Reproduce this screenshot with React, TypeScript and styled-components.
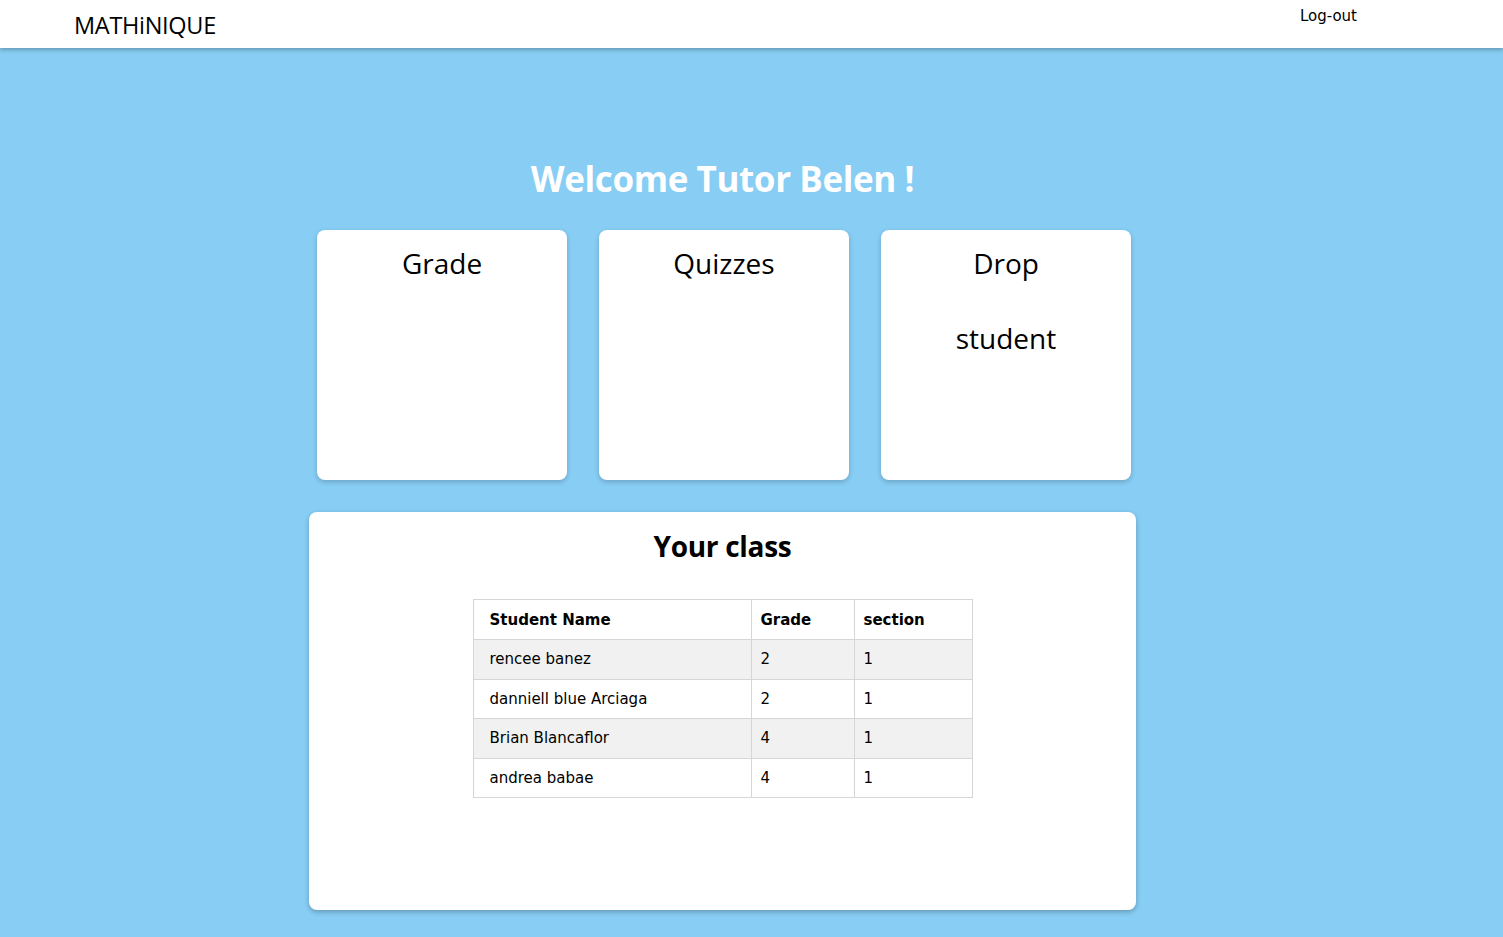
import styled, { createGlobalStyle } from "styled-components";

const GlobalStyle = createGlobalStyle`
  html, body {
    margin: 0;
    padding: 0;
    background: #87cdf4;
    font-family: "Open Sans", "Noto Sans", sans-serif;
  }
`;

const students = [
  { name: "rencee banez", grade: 2, section: 1 },
  { name: "danniell blue Arciaga", grade: 2, section: 1 },
  { name: "Brian Blancaflor", grade: 4, section: 1 },
  { name: "andrea babae", grade: 4, section: 1 },
];

const Page = styled.div`
  min-height: 937px;
  background: #87cdf4;
`;

const TopBar = styled.header`
  height: 48px;
  background: #fff;
  box-shadow: 0 2px 4px rgba(0, 0, 0, 0.25);
  display: flex;
  justify-content: space-between;
  align-items: flex-start;
  padding: 0 146px 0 74px;
`;

const Logo = styled.div`
  font-size: 23.5px;
  line-height: 24px;
  margin-top: 13px;
  color: #000;
  letter-spacing: -0.3px;
`;

const LogOut = styled.a`
  font-family: "DejaVu Sans", Verdana, sans-serif;
  font-size: 15px;
  color: #000;
  text-decoration: none;
  margin-top: 7px;
  cursor: pointer;
`;

const Main = styled.main`
  display: flex;
  flex-direction: column;
  align-items: center;
  padding: 107px 58px 0 0;
`;

const Welcome = styled.h1`
  margin: 0 0 27px 0;
  color: #fff;
  font-size: 35px;
  font-weight: 700;
  line-height: 48px;
  letter-spacing: -0.4px;
`;

const CardRow = styled.div`
  display: flex;
  gap: 32px;
  margin-left: 3px;
`;

const Card = styled.div`
  width: 250px;
  height: 250px;
  background: #fff;
  border-radius: 8px;
  box-shadow: 0 2px 5px rgba(0, 0, 0, 0.2);
  display: flex;
  flex-direction: column;
  align-items: center;
  padding-top: 13px;
  box-sizing: border-box;
  cursor: pointer;
`;

const CardLine = styled.div`
  font-size: 28px;
  line-height: 40px;
  color: #000;
  & + & {
    margin-top: 35px;
  }
`;

const ClassPanel = styled.section`
  width: 827px;
  height: 398px;
  margin-top: 32px;
  background: #fff;
  border-radius: 8px;
  box-shadow: 0 2px 5px rgba(0, 0, 0, 0.25);
  display: flex;
  flex-direction: column;
  align-items: center;
  box-sizing: border-box;
  padding-top: 15px;
`;

const PanelTitle = styled.h2`
  margin: 0 0 34px 0;
  font-size: 28px;
  font-weight: 700;
  line-height: 38px;
  color: #000;
  letter-spacing: -0.3px;
`;

const Table = styled.table`
  border-collapse: collapse;
  width: 500px;
  font-family: "DejaVu Sans", Verdana, sans-serif;
  font-size: 15px;
  color: #000;
  border: 1px solid #d6d6d6;
`;

const Row = styled.tr<{ $shade?: boolean }>`
  background: ${(p) => (p.$shade ? "#f1f1f1" : "#fff")};
`;

const HeadCell = styled.th<{ $w: number; $first?: boolean }>`
  width: ${(p) => p.$w}px;
  height: 40px;
  text-align: left;
  font-weight: 700;
  padding: 0 0 0 ${(p) => (p.$first ? 16 : 9)}px;
  border: 1px solid #d6d6d6;
  box-sizing: border-box;
`;

const Cell = styled.td<{ $first?: boolean }>`
  height: 39.5px;
  padding: 0 0 0 ${(p) => (p.$first ? 16 : 9)}px;
  border: 1px solid #d6d6d6;
  box-sizing: border-box;
`;

export default function App() {
  return (
    <Page>
      <GlobalStyle />
      <TopBar>
        <Logo>MATHiNIQUE</Logo>
        <LogOut>Log-out</LogOut>
      </TopBar>
      <Main>
        <Welcome>Welcome Tutor Belen !</Welcome>
        <CardRow>
          <Card>
            <CardLine>Grade</CardLine>
          </Card>
          <Card>
            <CardLine>Quizzes</CardLine>
          </Card>
          <Card>
            <CardLine>Drop</CardLine>
            <CardLine>student</CardLine>
          </Card>
        </CardRow>
        <ClassPanel>
          <PanelTitle>Your class</PanelTitle>
          <Table>
            <thead>
              <Row>
                <HeadCell $w={278} $first>
                  Student Name
                </HeadCell>
                <HeadCell $w={103}>Grade</HeadCell>
                <HeadCell $w={118}>section</HeadCell>
              </Row>
            </thead>
            <tbody>
              {students.map((s, i) => (
                <Row key={s.name} $shade={i % 2 === 0}>
                  <Cell $first>{s.name}</Cell>
                  <Cell>{s.grade}</Cell>
                  <Cell>{s.section}</Cell>
                </Row>
              ))}
            </tbody>
          </Table>
        </ClassPanel>
      </Main>
    </Page>
  );
}
